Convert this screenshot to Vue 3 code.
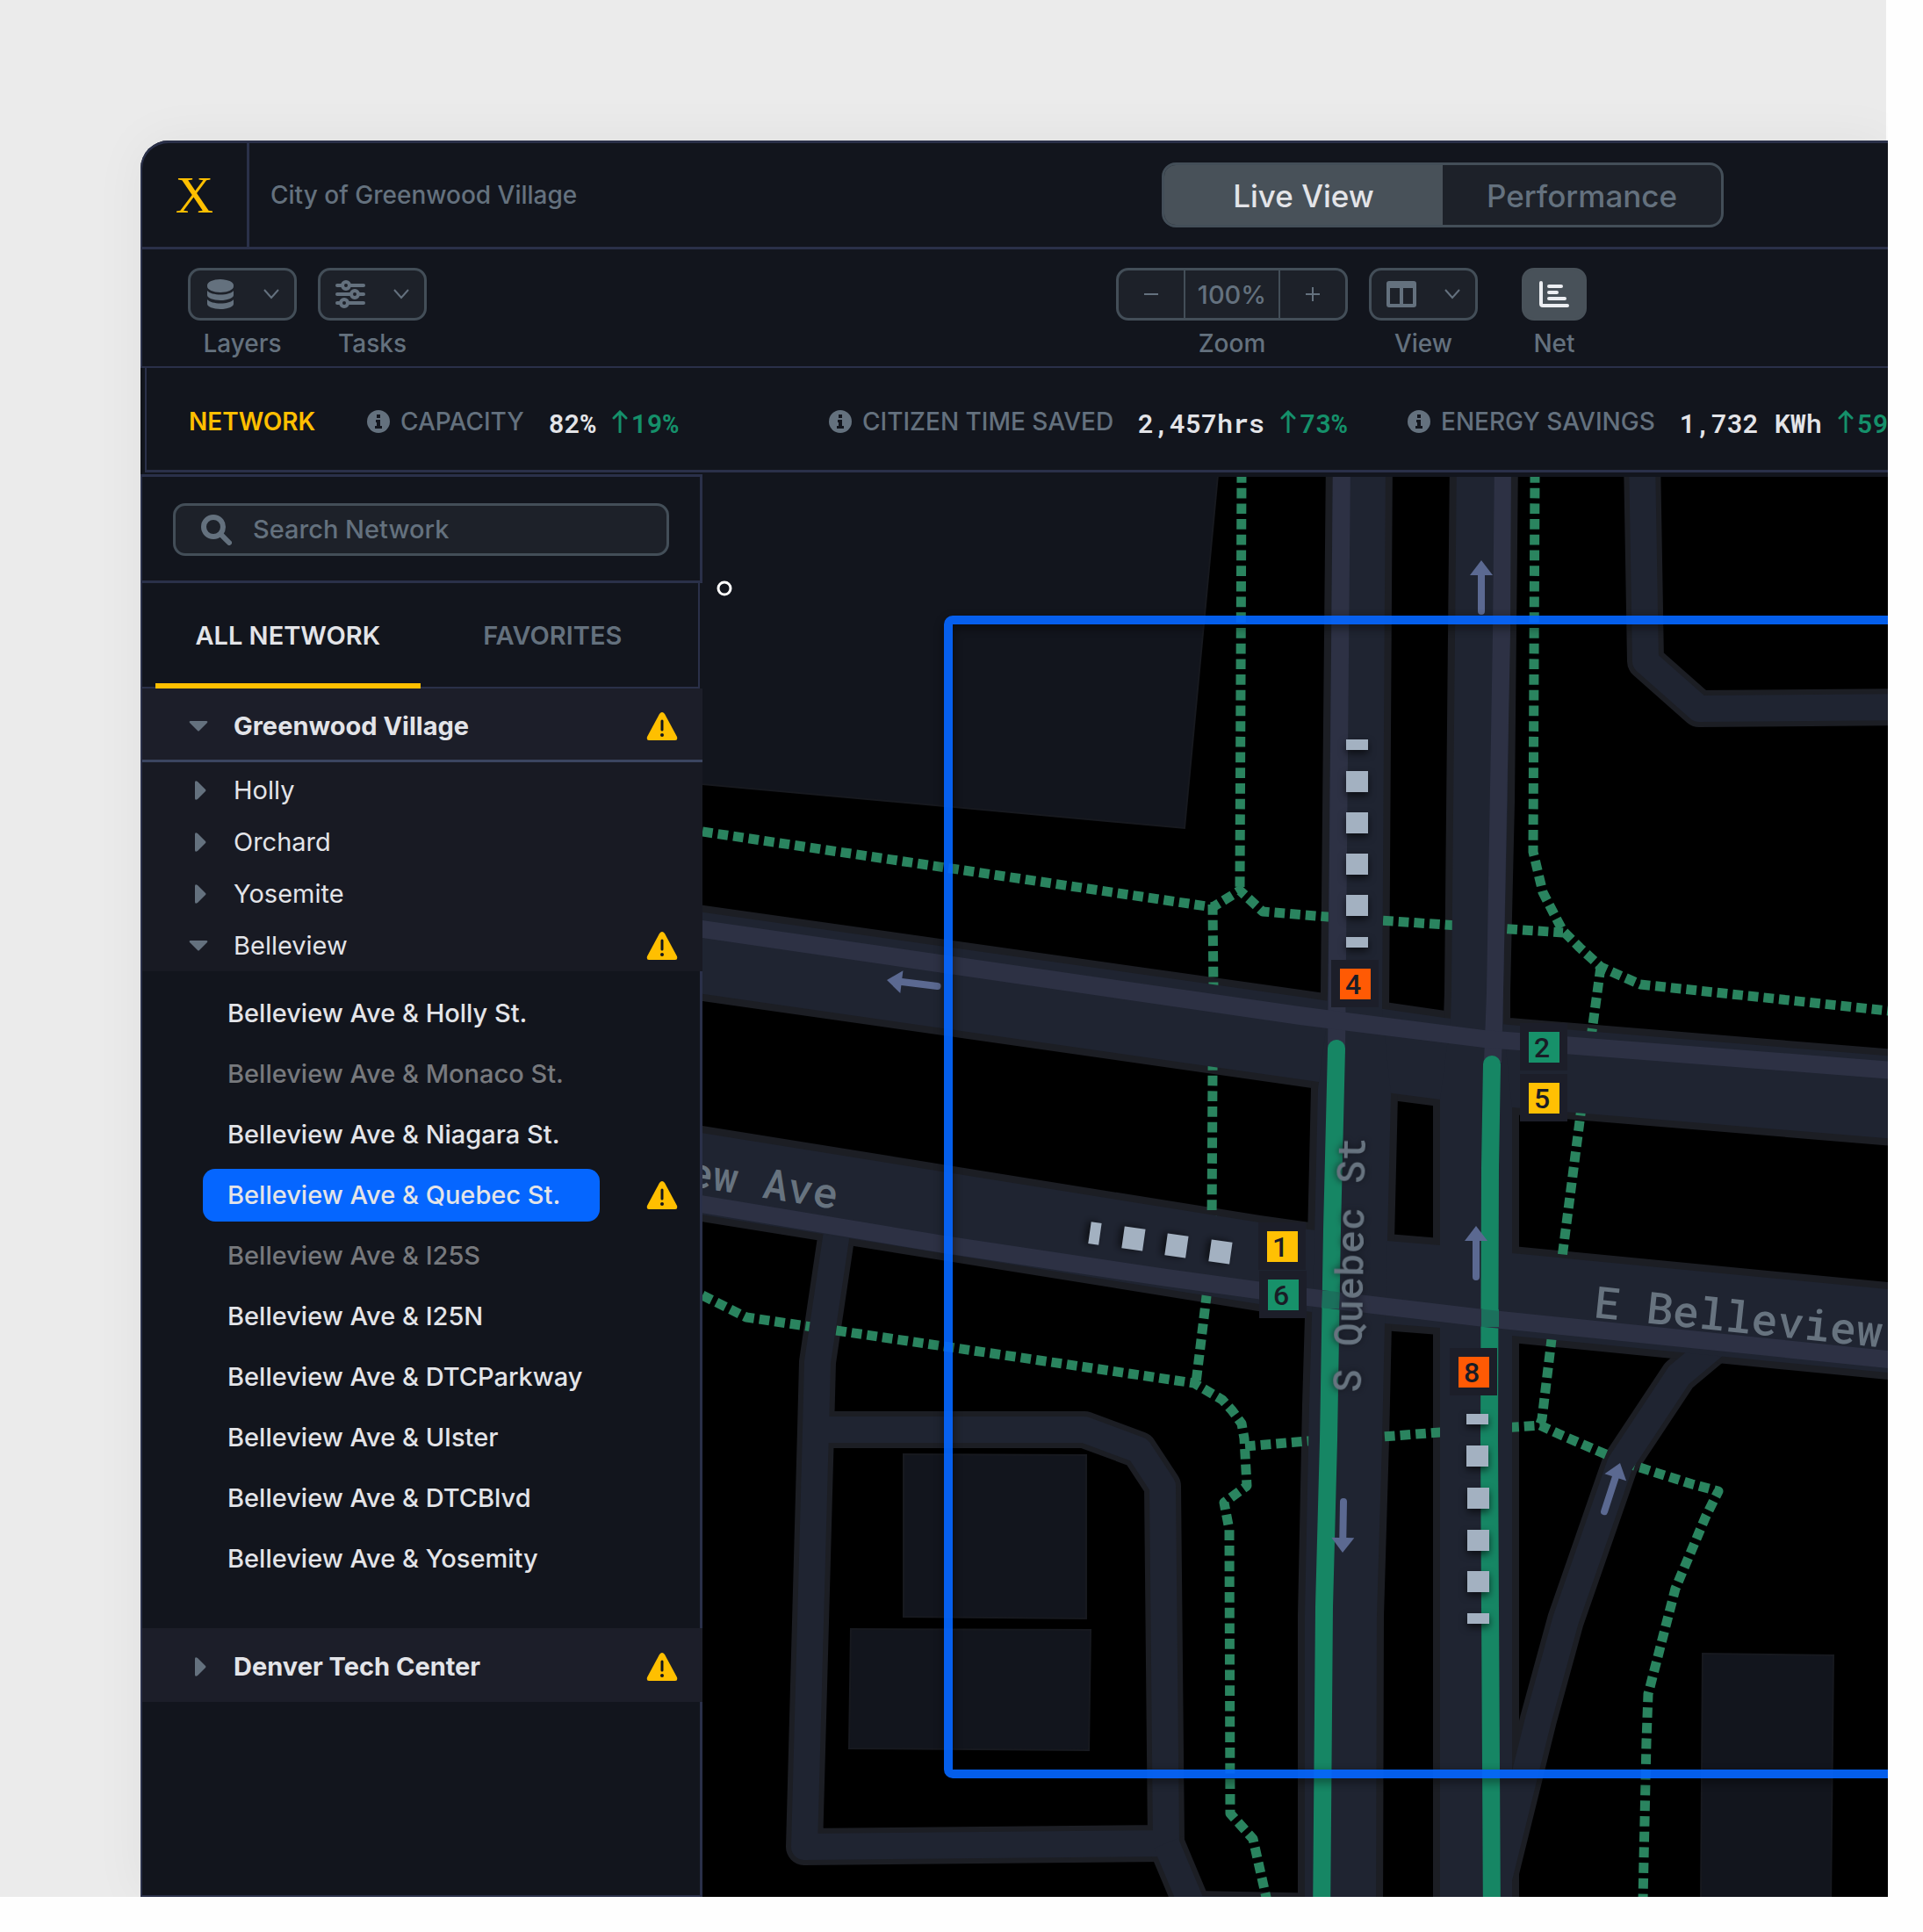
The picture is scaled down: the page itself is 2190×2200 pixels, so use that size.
<script setup>
import { ref } from 'vue'

const zoom = ref(100)
const mode = ref('live')
const tab = ref('all')
const query = ref('')
const selected = ref('Belleview Ave & Quebec St.')

const metrics = [
  { label: 'CAPACITY', value: '82%', change: '19%' },
  { label: 'CITIZEN TIME SAVED', value: '2,457hrs', change: '73%' },
  { label: 'ENERGY SAVINGS', value: '1,732 KWh', change: '59%' },
]

const areas = [
  { name: 'Holly' },
  { name: 'Orchard' },
  { name: 'Yosemite' },
  { name: 'Belleview', open: true, alert: true },
]

const crossings = [
  { name: 'Belleview Ave & Holly St.' },
  { name: 'Belleview Ave & Monaco St.', offline: true },
  { name: 'Belleview Ave & Niagara St.' },
  { name: 'Belleview Ave & Quebec St.', alert: true },
  { name: 'Belleview Ave & I25S', offline: true },
  { name: 'Belleview Ave & I25N' },
  { name: 'Belleview Ave & DTCParkway' },
  { name: 'Belleview Ave & UIster' },
  { name: 'Belleview Ave & DTCBlvd' },
  { name: 'Belleview Ave & Yosemity' },
]

// Main carriageways, as closed shapes
const roads = [
  'M780 1036 L1480 1135 L1645 1159 L1719 1167 L2170 1204 V1298 L1722 1261 L1640 1252 L1586 1245 L1495 1231 L780 1129 Z',
  'M780 1287 L1434 1392 L1491 1400 L1580 1413 L1640 1418 L1722 1427 L2170 1470 V1565 L1722 1521 L1640 1512 L1576 1507 L1494 1494 L1434 1485 L780 1380 Z',
  'M1518 520 L1512 1130 L1509 1180 L1501 1240 L1497 1410 L1494 1500 L1491 1600 L1486 1840 V2190 H1567 L1568 1840 L1574 1640 L1577 1507 L1580 1413 L1584 1246 L1574 1150 L1578 520 Z',
  'M1659 520 L1653 1130 L1652 1160 L1640 1252 V2190 H1722 V1261 L1712 1166 V1130 L1717 913 L1721 520 Z',
]

// Side streets, as centre lines
const streets = [
  'M955 1390 L931 1551 L929 1628 L916 2103 L1328 2099 L1324 1692 L1297 1651 L1235 1628 H929',
  'M1328 2099 L1362 2180',
  'M1360 2174 L1560 2178',
  'M1870 520 L1874 753 L1935 807 L2170 805',
  'M1955 1530 L1912 1566 L1845 1667 L1783 1845 L1752 1958 L1697 2180',
]

const walkways = [
  'M800 947 L1381 1033 L1412 1014 L1438 1038 L1512 1044 L1780 1062',
  'M1414 538 L1412 1014',
  'M1381 1030 L1382 1130 L1381 1221 L1380 1400 L1374 1476 L1362 1575',
  'M1748 538 L1746 970 L1757 1016 L1773 1047 L1780 1060 L1799 1079 L1823 1101 L1868 1121 L2160 1152',
  'M1823 1101 L1813 1174 L1800 1269 L1779 1432 L1767 1525 L1756 1616 L1753 1624',
  'M800 1475 L850 1500 L959 1516 L1360 1575 L1392 1594 L1403 1606 L1414 1621 L1417 1638 L1420 1692 L1394 1711 L1400 1742 L1401 2065 L1427 2094 L1443 2165',
  'M1418 1647 L1489 1641 L1574 1636 L1640 1631 L1725 1625 L1754 1623 L1780 1635 L1831 1657 L1861 1669 L1927 1690 L1957 1698 L1943 1726 L1908 1809 L1877 1929 L1875 1983 L1871 2165',
]

const buildings = [
  'M790 530 H1388 L1349 943 L790 892 Z',
  'M1029 1656 L1237 1657 V1843 L1029 1841 Z',
  'M969 1855 L1242 1856 L1240 1993 L967 1991 Z',
  'M1939 1883 L2088 1885 L2085 2170 H1937 Z',
]

const vehicles = [
  { x: 1545, y: 848, h: 12 }, { x: 1545, y: 890, h: 24 }, { x: 1545, y: 937, h: 24 },
  { x: 1545, y: 984, h: 24 }, { x: 1545, y: 1031, h: 24 }, { x: 1545, y: 1073, h: 12 },
  { x: 1682, y: 1616, h: 12 }, { x: 1682, y: 1658, h: 24 }, { x: 1683, y: 1706, h: 24 },
  { x: 1683, y: 1754, h: 24 }, { x: 1683, y: 1801, h: 24 }, { x: 1683, y: 1843, h: 12 },
  { x: 1247, y: 1404, h: 12, turn: 98 }, { x: 1291, y: 1410, h: 24, turn: 98 },
  { x: 1340, y: 1418, h: 24, turn: 98 }, { x: 1390, y: 1425, h: 24, turn: 98 },
]

const arrows = [
  { x: 1687, y: 638, turn: 0 },
  { x: 1681, y: 1396, turn: 0 },
  { x: 1529, y: 1768, turn: 181 },
  { x: 1010, y: 1116, turn: -83 },
  { x: 1845, y: 1666, turn: 18 },
]

const phases = [
  { n: 4, x: 1543, y: 1120, tone: 'stop' },
  { n: 2, x: 1758, y: 1192, tone: 'go' },
  { n: 5, x: 1758, y: 1250, tone: 'wait' },
  { n: 1, x: 1460, y: 1419, tone: 'wait' },
  { n: 6, x: 1461, y: 1474, tone: 'go' },
  { n: 8, x: 1678, y: 1562, tone: 'stop' },
]
</script>

<template>
  <div class="page">
    <div class="stage">
      <div class="window">
        <header class="titlebar">
          <a class="logo" href="#" aria-label="Home">X</a>
          <span class="city">City of Greenwood Village</span>
          <div class="switch">
            <button type="button" :class="{ on: mode === 'live' }" @click="mode = 'live'">Live View</button>
            <button type="button" :class="{ on: mode === 'perf' }" @click="mode = 'perf'">Performance</button>
          </div>
        </header>

        <div class="toolbar">
          <div class="tool">
            <button type="button" class="menu" aria-labelledby="t-layers">
              <svg class="glyph" viewBox="0 0 36 36">
                <path d="M3 8a15 7 0 0 1 30 0v1a15 7 0 0 1-30 0z" />
                <path d="M3 14c5 6 25 6 30 0v5a15 6 0 0 1-30 0z" />
                <path d="M3 24c5 6 25 6 30 0v5a15 6 0 0 1-30 0z" />
              </svg>
              <svg class="chev" viewBox="0 0 18 12"><path d="M1 1l8 9 8-9" /></svg>
            </button>
            <span id="t-layers">Layers</span>
          </div>
          <div class="tool">
            <button type="button" class="menu" aria-labelledby="t-tasks">
              <svg class="glyph line" viewBox="0 0 36 36">
                <path d="M3 8h6M17 8h16M3 18h16M27 18h6M3 28h4M15 28h18" />
                <circle cx="13" cy="8" r="4" /><circle cx="23" cy="18" r="4" /><circle cx="11" cy="28" r="4" />
              </svg>
              <svg class="chev" viewBox="0 0 18 12"><path d="M1 1l8 9 8-9" /></svg>
            </button>
            <span id="t-tasks">Tasks</span>
          </div>

          <div class="tool zoom">
            <div class="stepper" role="group" aria-labelledby="t-zoom">
              <button type="button" aria-label="Zoom out" @click="zoom -= 10">
                <svg viewBox="0 0 18 18"><path d="M1 9h16" /></svg>
              </button>
              <output>{{ zoom }}%</output>
              <button type="button" aria-label="Zoom in" @click="zoom += 10">
                <svg viewBox="0 0 18 18"><path d="M1 9h16M9 1v16" /></svg>
              </button>
            </div>
            <span id="t-zoom">Zoom</span>
          </div>
          <div class="tool">
            <button type="button" class="menu" aria-labelledby="t-view">
              <svg class="glyph" viewBox="0 0 36 36">
                <path fill-rule="evenodd" d="M4 3h28a3 3 0 0 1 3 3v24a3 3 0 0 1-3 3H4a3 3 0 0 1-3-3V6a3 3 0 0 1 3-3zM5 11v18h11V11zM20 11v18h11V11z" />
              </svg>
              <svg class="chev" viewBox="0 0 18 12"><path d="M1 1l8 9 8-9" /></svg>
            </button>
            <span id="t-view">View</span>
          </div>
          <div class="tool net">
            <button type="button" class="solid" aria-labelledby="t-net" aria-pressed="true">
              <svg class="glyph" viewBox="0 0 36 36">
                <path d="M3 5v24a2 2 0 0 0 2 2h28M12 9h14M12 16h9M12 23h18" />
              </svg>
            </button>
            <span id="t-net">Net</span>
          </div>
        </div>

        <div class="strip">
          <div class="metrics">
            <strong>NETWORK</strong>
            <div v-for="m in metrics" :key="m.label" class="metric">
              <svg class="info" viewBox="0 0 26 26">
                <circle cx="13" cy="13" r="13" />
                <path d="M11 5h4v4h-4zM10 11h5v7h2v3H9v-3h2v-4h-1z" />
              </svg>
              <span class="name">{{ m.label }}</span>
              <b>{{ m.value }}</b>
              <svg class="up" viewBox="0 0 18 26"><path d="M9 25V3M2 9l7-7 7 7" /></svg>
              <em>{{ m.change }}</em>
            </div>
          </div>
        </div>

        <main class="body">
          <aside class="side">
            <div class="search">
              <label class="field">
                <svg viewBox="0 0 36 36" aria-hidden="true"><circle cx="15" cy="15" r="11" /><path d="M23 23l10 10" /></svg>
                <input v-model="query" type="text" placeholder="Search Network" aria-label="Search Network" />
              </label>
            </div>
            <div class="tabs">
              <button type="button" :class="{ on: tab === 'all' }" @click="tab = 'all'">ALL NETWORK</button>
              <button type="button" :class="{ on: tab === 'fav' }" @click="tab = 'fav'">FAVORITES</button>
            </div>

            <div class="row group open">
              <button type="button" aria-expanded="true">
                <svg class="caret" viewBox="0 0 24 24"><path d="M3 6h18q2 0 1 2l-9 9q-1 1-2 0L2 8Q1 6 3 6z" /></svg>
                Greenwood Village
              </button>
              <svg class="warn" viewBox="0 0 36 32"><path d="M15 2q3-4 6 0l14 26q1 4-2 4H3q-3 0-2-4z" /><path class="bang" d="M18 10v10" /><circle cx="18" cy="26" r="2" /></svg>
            </div>
            <div class="areas">
              <div v-for="a in areas" :key="a.name" class="row">
                <button type="button" :aria-expanded="!!a.open">
                  <svg class="caret" viewBox="0 0 24 24">
                    <path v-if="a.open" d="M3 6h18q2 0 1 2l-9 9q-1 1-2 0L2 8Q1 6 3 6z" />
                    <path v-else d="M8 3q0-3 3-1l9 9q1 1 0 2l-9 9q-3 2-3-1z" />
                  </svg>
                  {{ a.name }}
                </button>
                <svg v-if="a.alert" class="warn" viewBox="0 0 36 32"><path d="M15 2q3-4 6 0l14 26q1 4-2 4H3q-3 0-2-4z" /><path class="bang" d="M18 10v10" /><circle cx="18" cy="26" r="2" /></svg>
              </div>
            </div>
            <ul class="crossings">
              <li v-for="c in crossings" :key="c.name">
                <a href="#" :class="{ on: c.name === selected, offline: c.offline }" @click.prevent="selected = c.name">{{ c.name }}</a>
                <svg v-if="c.alert" class="warn" viewBox="0 0 36 32"><path d="M15 2q3-4 6 0l14 26q1 4-2 4H3q-3 0-2-4z" /><path class="bang" d="M18 10v10" /><circle cx="18" cy="26" r="2" /></svg>
              </li>
            </ul>
            <div class="row group">
              <button type="button" aria-expanded="false">
                <svg class="caret" viewBox="0 0 24 24"><path d="M8 3q0-3 3-1l9 9q1 1 0 2l-9 9q-3 2-3-1z" /></svg>
                Denver Tech Center
              </button>
              <svg class="warn" viewBox="0 0 36 32"><path d="M15 2q3-4 6 0l14 26q1 4-2 4H3q-3 0-2-4z" /><path class="bang" d="M18 10v10" /><circle cx="18" cy="26" r="2" /></svg>
            </div>
            <div class="rest"></div>
          </aside>

          <div class="map">
            <svg viewBox="800 543 1350 1617" preserveAspectRatio="xMinYMin slice">
              <path v-for="d in buildings" :key="d" class="building" :d="d" />
              <path v-for="d in streets" :key="d" class="street edge" :d="d" />
              <path v-for="d in roads" :key="d" class="road edge" :d="d" />
              <path v-for="d in walkways" :key="d" class="walk" :d="d" />
              <path v-for="d in streets" :key="d" class="street" :d="d" />
              <path v-for="d in roads" :key="d" class="road" :d="d" />

              <path class="lane" d="M1518 520 H1538 L1532 1200 H1512 Z" />
              <path class="lane" d="M1702 520 H1721 L1720 721 L1712 1130 L1710 1210 H1690 L1693 1130 L1700 721 Z" />
              <path class="lane" d="M780 1045 L1480 1146 L1690 1173 L1730 1176 L2170 1210 V1230 L1730 1196 L1690 1193 L1480 1167 L780 1065 Z" />
              <path class="flow" d="M1522 1194 L1517 1400 L1513 1640 L1508 1830 L1505 2190" />
              <path class="flow" d="M1699 1212 L1697 1330 L1696 1640 L1697 1830 L1699 2190" />
              <path class="lane" d="M780 1358 L1075 1407 L1329 1445 L1489 1467 L1690 1491 L2170 1540 V1560 L1690 1511 L1489 1487 L1329 1465 L1075 1427 L780 1378 Z" />
              <path class="flow thin" d="M1516 1470 L1515 1490 M1697 1491 V1511" />

              <path
                v-for="a in arrows" :key="a.x" class="arrow"
                d="M0 0 L13 17 H4 V58 Q4 62 0 62 Q-4 62 -4 58 V17 H-13 Z"
                :transform="`translate(${a.x} ${a.y}) rotate(${a.turn})`"
              />

              <text class="label" x="0" y="0" text-anchor="end" transform="translate(952 1377) rotate(9)">E Belleview Ave</text>
              <text class="label big" x="0" y="0" transform="translate(1814 1500) rotate(6)">E Belleview</text>
              <text class="label small" x="0" y="0" transform="translate(1550 1586) rotate(-89)">S Quebec St</text>

              <rect
                v-for="v in vehicles" :key="v.x + '-' + v.y" class="vehicle" x="-12" :y="-v.h / 2" width="25" :height="v.h"
                :transform="`translate(${v.x} ${v.y}) rotate(${v.turn || 0})`"
              />

              <g v-for="p in phases" :key="p.n" :transform="`translate(${p.x} ${p.y})`">
                <rect class="plate" x="-27" y="-27" width="54" height="54" />
                <rect :class="p.tone" x="-17" y="-17" width="35" height="35" />
                <text class="digit" x="-2" y="12" text-anchor="middle">{{ p.n }}</text>
              </g>

              <rect class="frame" x="1080" y="706" width="1600" height="1314" rx="5" />
              <circle class="cursor" cx="825" cy="670" r="7" />
            </svg>
          </div>
        </main>
      </div>
    </div>
  </div>
</template>

<style>
body {
  margin: 0;
  background: #fefefe;
}
</style>

<style scoped>
* {
  box-sizing: border-box;
}
.page {
  --bg: #12151d;
  --rule: #2a3049;
  --muted: #64717e;
  --text: #e3e4e8;
  --field: #1d2129;
  --outline: #434e58;
  --amber: #ffbf00;
  --green: #15906a;
  display: flex;
  flex-direction: column;
  min-height: 100vh;
  padding: 0 40px 40px 0;
  font-family: Inter, "Liberation Sans", sans-serif;
  font-size: 28px;
  line-height: 32px;
  font-weight: 500;
  color: var(--muted);
}
.stage {
  flex: 1;
  display: flex;
  padding: 160px 0 0 160px;
  overflow: hidden;
  background: linear-gradient(#ebebeb, #ebebeb) 0 0 / calc(100% - 2px) 100% no-repeat;
}
.window {
  flex: 1;
  min-width: 0;
  display: flex;
  flex-direction: column;
  background: var(--bg);
  border-top-left-radius: 32px;
  box-shadow: 0 0 60px rgba(0, 0, 0, 0.05);
}
button {
  font: inherit;
  color: inherit;
  background: none;
  border: 0;
  padding: 0;
  margin: 0;
}
a {
  color: inherit;
  text-decoration: none;
}

.titlebar {
  display: flex;
  align-items: center;
  min-height: 124px;
  border: solid var(--rule);
  border-width: 3px 0 3px 2px;
  border-top-left-radius: 32px;
}
.logo {
  align-self: stretch;
  display: flex;
  align-items: center;
  justify-content: center;
  width: 122px;
  border-right: 3px solid var(--rule);
  font-family: "Liberation Serif", serif;
  font-size: 60px;
  font-weight: 400;
  color: var(--amber);
}
.city {
  margin-left: 24px;
}
.switch {
  display: flex;
  margin-left: auto;
  margin-right: 187px;
  width: 640px;
  height: 74px;
  border: 3px solid var(--outline);
  border-radius: 16px;
  background: var(--field);
  overflow: hidden;
  font-size: 35px;
}
.switch button {
  flex: 1;
  padding-top: 2px;
}
.switch .on {
  background: #485159;
  color: var(--text);
}

.toolbar {
  display: flex;
  align-items: flex-start;
  gap: 24px;
  min-height: 135px;
  padding: 21px 343px 10px 52px;
  border: solid var(--rule);
  border-width: 0 0 2px 2px;
}
.tool {
  display: flex;
  flex-direction: column;
  align-items: center;
  gap: 10px;
}
.zoom {
  margin-left: auto;
}
.net {
  margin-left: 26px;
}
.menu,
.stepper,
.solid {
  display: flex;
  align-items: center;
  height: 60px;
  border: 3px solid var(--outline);
  border-radius: 14px;
  background: var(--field);
}
.menu {
  width: 124px;
  justify-content: space-between;
  padding: 0 17px 0 16px;
}
.glyph {
  width: 36px;
  height: 36px;
  fill: var(--muted);
}
.glyph.line {
  fill: none;
  stroke: var(--muted);
  stroke-width: 4;
  stroke-linecap: round;
}
.chev {
  width: 18px;
  height: 12px;
  fill: none;
  stroke: var(--muted);
  stroke-width: 2;
}
.stepper {
  width: 264px;
}
.stepper button {
  flex: 1;
  display: flex;
  align-items: center;
  justify-content: center;
  align-self: stretch;
}
.stepper svg {
  width: 18px;
  height: 18px;
  stroke: var(--muted);
  stroke-width: 2;
}
.stepper output {
  align-self: stretch;
  display: flex;
  align-items: center;
  justify-content: center;
  width: 110px;
  padding-top: 2px;
  border: solid var(--outline);
  border-width: 0 2px;
  font-size: 29px;
}
.solid {
  width: 74px;
  justify-content: center;
  background: #485159;
  border-color: #485159;
}
.solid .glyph {
  fill: none;
  stroke: #eceef2;
  stroke-width: 4;
  stroke-linecap: round;
}

.strip {
  padding-left: 5px;
}
.metrics {
  display: grid;
  grid-template-columns: 203px 526px 659px auto;
  align-items: center;
  min-height: 119px;
  padding: 5px 0 0 48px;
  border: solid var(--rule);
  border-width: 0 0 3px 2px;
  overflow: hidden;
  white-space: nowrap;
}
.metrics strong {
  font-weight: 600;
  color: var(--amber);
}
.metric {
  display: flex;
  align-items: center;
  width: 0;
}
.metric svg,
.metric span {
  flex: none;
}
.info {
  width: 26px;
  height: 26px;
  margin-right: 12px;
  fill: var(--muted);
}
.info path {
  fill: var(--bg);
}
.metric b,
.metric em {
  padding-top: 5px;
  font-family: "Roboto Mono", "DejaVu Sans Mono", monospace;
  font-size: 30px;
  font-style: normal;
  font-weight: 600;
  color: var(--text);
}
.metric b {
  margin: 0 18px 0 28px;
}
.metric em {
  color: var(--green);
}
.up {
  width: 18px;
  height: 26px;
  margin-right: 4px;
  fill: none;
  stroke: var(--green);
  stroke-width: 3;
  stroke-linecap: round;
}

.body {
  flex: 1;
  display: flex;
  min-height: 0;
  padding-top: 2px;
}
.side {
  position: relative;
  z-index: 1;
  flex: none;
  display: flex;
  flex-direction: column;
  width: 640px;
  border: solid var(--rule);
  border-width: 3px 0 2px 2px;
  background: var(--bg);
  font-size: 29px;
}
.search {
  padding: 30px 35px 28px;
  border: solid var(--rule);
  border-width: 0 3px 3px 0;
}
.field {
  display: flex;
  align-items: center;
  gap: 24px;
  height: 60px;
  padding: 0 28px;
  border: 3px solid var(--outline);
  border-radius: 14px;
  background: var(--field);
}
.field svg {
  flex: none;
  width: 36px;
  height: 36px;
  fill: none;
  stroke: var(--muted);
  stroke-width: 6;
  stroke-linecap: round;
}
.field input {
  flex: 1;
  min-width: 0;
  padding: 0;
  border: 0;
  outline: 0;
  background: none;
  font: inherit;
  color: var(--text);
}
.field input::placeholder {
  color: var(--muted);
  opacity: 1;
}
.tabs {
  display: flex;
  margin-right: 3px;
  padding: 0 15px;
  border-right: 2px solid var(--rule);
  box-shadow: inset 0 -2px var(--rule);
}
.tabs button {
  flex: 1;
  height: 120px;
  border-top: 6px solid transparent;
  border-bottom: 6px solid transparent;
  font-weight: 600;
}
.tabs .on {
  color: var(--text);
  border-bottom-color: var(--amber);
}
.row {
  display: flex;
  align-items: center;
  justify-content: space-between;
  min-height: 59px;
  padding: 0 28px 0 52px;
  font-weight: 400;
  color: var(--text);
}
.row button {
  display: flex;
  align-items: center;
  gap: 28px;
}
.group {
  min-height: 84px;
  padding-top: 4px;
  background: #1c1e29;
  font-weight: 700;
}
.group.open {
  border-bottom: 3px solid #3b4560;
}
.caret {
  width: 24px;
  height: 24px;
  fill: var(--muted);
}
.warn {
  flex: none;
  width: 36px;
  height: 32px;
  fill: var(--amber);
}
.warn circle {
  fill: var(--bg);
}
.warn .bang {
  stroke: var(--bg);
  stroke-width: 3;
  stroke-linecap: round;
}
.areas {
  padding-top: 2px;
  background: #181a23;
}
.crossings {
  margin: 0;
  padding: 13px 25px 45px 69px;
  border-right: 3px solid var(--rule);
  list-style: none;
  color: var(--text);
}
.crossings li {
  display: flex;
  align-items: center;
  justify-content: space-between;
  height: 69px;
}
.crossings a {
  display: flex;
  align-items: center;
  min-width: 452px;
  height: 60px;
  padding: 0 28px;
  border-radius: 14px;
}
.crossings .on {
  background: #0566ff;
}
.crossings .offline {
  color: #77797d;
}
.rest {
  flex: 1;
  border-right: 3px solid var(--rule);
}

.map {
  position: relative;
  flex: 1;
  min-width: 0;
  border-top: 3px solid var(--bg);
  background: #000;
  overflow: hidden;
}
.map > svg {
  position: absolute;
  inset: 0;
  width: 100%;
  height: 100%;
}
.building {
  fill: #12151d;
  stroke: #17191f;
  stroke-width: 2;
}
.road {
  fill: #1f2431;
}
.road.edge {
  fill: #1c1e24;
  stroke: #1c1e24;
  stroke-width: 16;
}
.street {
  fill: none;
  stroke: #1f2431;
  stroke-width: 30;
  stroke-linejoin: round;
}
.street.edge {
  stroke: #1c1e24;
  stroke-width: 42;
}
.walk {
  fill: none;
  stroke: #2a845f;
  stroke-width: 11;
  stroke-dasharray: 11.7 6;
  stroke-linejoin: round;
}
.lane {
  fill: #2d3144;
}
.flow {
  fill: none;
  stroke: #168664;
  stroke-width: 20;
  stroke-linecap: round;
}
.flow.thin {
  stroke-linecap: butt;
  opacity: 0.75;
}
.arrow {
  fill: #5b6991;
}
.label {
  font-family: "Roboto Mono", "DejaVu Sans Mono", monospace;
  font-size: 48px;
  font-weight: 500;
  fill: #67737f;
}
.label.big {
  font-size: 50px;
}
.label.small {
  font-size: 44px;
  filter: drop-shadow(0 0 4px #12151d);
}
.vehicle {
  fill: #a3b1c1;
  filter: drop-shadow(0 4px 4px rgba(0, 0, 0, 0.6));
}
.plate {
  fill: #1c1e29;
}
.stop {
  fill: #ff5a04;
}
.go {
  fill: #17916a;
}
.wait {
  fill: #ffc003;
}
.digit {
  font-family: Roboto, sans-serif;
  font-size: 32px;
  font-weight: 500;
  fill: #1a1c26;
}
.frame {
  fill: none;
  stroke: #0566ff;
  stroke-width: 10;
  opacity: 0.92;
  filter: drop-shadow(0 4px 6px rgba(0, 0, 0, 0.5));
}
.cursor {
  fill: none;
  stroke: #fff;
  stroke-width: 3;
}
</style>
